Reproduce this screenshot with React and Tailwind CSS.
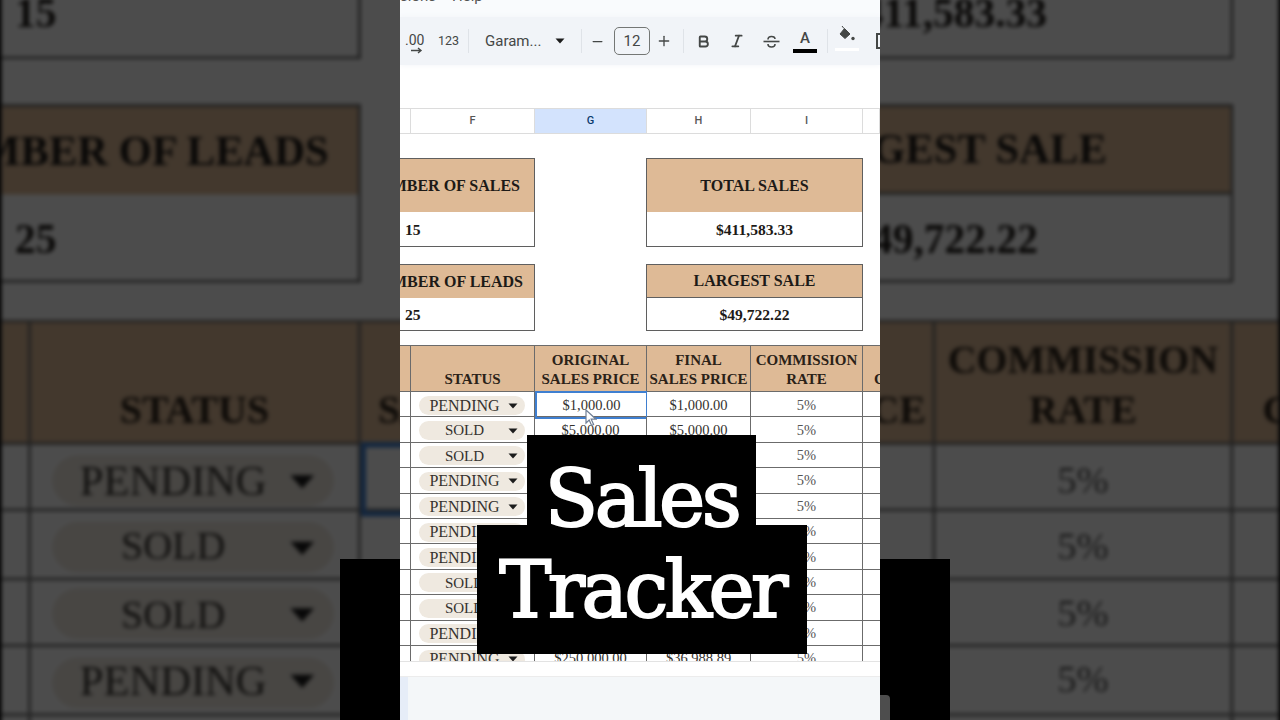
import React from 'react';
import { Minus, Plus, Bold, Italic } from 'lucide-react';

const SERIF = 'font-["Liberation_Serif",serif]';
const ROW_COLS = 'grid grid-cols-[11px_124px_112px_104px_112px_17px]';

const ROWS = [
    { status: 'PENDING', original: '$1,000.00', final: '$1,000.00', selected: true },
    { status: 'SOLD', original: '$5,000.00', final: '$5,000.00' },
    { status: 'SOLD' },
    { status: 'PENDING' },
    { status: 'PENDING' },
    { status: 'PENDING' },
    { status: 'PENDING' },
    { status: 'SOLD' },
    { status: 'SOLD' },
    { status: 'PENDING' },
    { status: 'PENDING', original: '$250,000.00', final: '$36,988.89' },
];

const Divider = ({ className }) => <div className={`h-[24px] w-px bg-[#dfe3e8] ${className}`} />;

const Caret = () => (
    <svg width="10" height="6" viewBox="0 0 10 6" className="shrink-0">
        <path d="M0.5 0.5h9L5 5.5z" fill="#1c1c1c" />
    </svg>
);

const Toolbar = () => (
    <div className="h-[108px] bg-white font-['Roboto',sans-serif] text-[#444746]">
        <div className="h-[17px] bg-[#f9fbfd] overflow-hidden">
            <div className="-mt-[12px] text-[15px] leading-[17px] whitespace-nowrap text-[#555]">
                sions<span className="ml-[16px]">Help</span>
            </div>
        </div>
        <div className="relative h-[48px] bg-[#f1f4f8] shadow-[0_0_6px_#f1f4f8] flex items-center [&>*]:shrink-0">
            <div className="relative w-[20px] ml-[5px] h-[24px] text-[14px] leading-[22px]">
                .00
                <svg width="12" height="7" viewBox="0 0 12 7" className="absolute left-[6px] top-[18px]">
                    <path d="M0 3.5h9M7 1l3 2.5L7 6" stroke="#444746" strokeWidth="1.4" fill="none" />
                </svg>
            </div>
            <span className="ml-[13px] text-[12.5px] w-[20px]">123</span>
            <Divider className="ml-[10px]" />
            <span className="ml-[16px] w-[60px] text-[15px] whitespace-nowrap">Garam...</span>
            <div className="ml-[10px]"><Caret /></div>
            <Divider className="ml-[16px]" />
            <Minus size={15} strokeWidth={2} className="ml-[8px]" />
            <div className="ml-[9px] w-[36px] h-[28px] border border-[#747775] rounded-[5px] flex items-center justify-center text-[15px]">12</div>
            <Plus size={16} strokeWidth={2} className="ml-[6px]" />
            <Divider className="ml-[11px]" />
            <Bold size={15} strokeWidth={3} className="ml-[12px]" />
            <Italic size={16} strokeWidth={2.6} className="ml-[18px]" />
            <svg width="17" height="17" viewBox="0 0 17 17" className="ml-[18px]" fill="none" stroke="#444746" strokeWidth="1.6">
                <path d="M0.5 8.5h16" />
                <path d="M5 6.5c0-4 7-4 7-0.5" />
                <path d="M5 11c0 4 7 4 7 0" />
            </svg>
            <div className="ml-[13px] w-[24px] h-[26px] flex flex-col items-center">
                <span className="text-[15px] leading-[20px] font-medium">A</span>
                <div className="mt-[1px] h-[4px] w-[24px] bg-black" />
            </div>
            <Divider className="ml-[10px]" />
            <div className="ml-[9px] w-[20px] flex flex-col items-center">
                <svg width="20" height="20" viewBox="0 0 20 20" className="-mt-[6px]">
                    <path d="M5 1l2 2.5M7.5 3.5L13 9l-5 4.5L3 9z" fill="#444746" stroke="#444746" strokeWidth="1" />
                    <circle cx="16" cy="13.5" r="1.7" fill="#444746" />
                </svg>
                <div className="mt-[3px] h-[3px] w-[24px] bg-white shrink-0" />
            </div>
            <div className="ml-[19px] w-[10px] h-[16px] border-2 border-[#444746]" />
        </div>
    </div>
);

const ColumnHeaders = () => (
    <div className={`${ROW_COLS} h-[26px] bg-white border-y border-[#dcdcdc] text-[11px] font-['Roboto',sans-serif] font-medium text-[#575757]`}>
        {['', 'F', 'G', 'H', 'I', ''].map((c, i) => (
            <div
                key={i}
                className={`flex items-center justify-center border-r border-[#dcdcdc] ${c === 'G' ? 'bg-[#d3e3fd] text-[#0b3a6e]' : ''}`}
            >
                {c}
            </div>
        ))}
    </div>
);

const StatBox = ({ title, value, titleH, bodyH, pr, ruled }) => (
    <div className={`border-y border-[#5f5f5f] ${pr ? 'border-r' : 'border-x'} font-bold text-[#1d1a17]`}>
        <div
            className={`flex items-center ${pr ? 'justify-end' : 'justify-center'} bg-[#deba96] text-[16px] whitespace-nowrap overflow-hidden ${ruled ? 'border-b border-[#5f5f5f]' : ''}`}
            style={{ height: titleH, paddingRight: pr }}
        >
            {title}
        </div>
        <div
            className={`flex items-center pt-[1px] ${pr ? 'pl-[5px]' : 'justify-center'} text-[15.6px] bg-white`}
            style={{ height: bodyH }}
        >
            {value}
        </div>
    </div>
);

const StatBoxes = () => (
    <div className={`${SERIF} h-[211px] bg-white grid grid-cols-[135px_111px_217px_17px] grid-rows-[89px_67px] gap-y-[17px] pt-[24px]`}>
        <StatBox title="NUMBER OF SALES" value="15" titleH={53} bodyH={34} pr={14} />
        <div />
        <StatBox title="TOTAL SALES" value="$411,583.33" titleH={53} bodyH={34} />
        <div />
        <StatBox title="NUMBER OF LEADS" value="25" titleH={33} bodyH={32} pr={11} />
        <div />
        <StatBox title="LARGEST SALE" value="$49,722.22" titleH={33} bodyH={32} ruled />
        <div />
    </div>
);

const HeaderCell = ({ lines, className = '' }) => (
    <div className={`flex flex-col justify-end items-center pb-[2px] border-r border-[#6b6b6b] text-[15px] leading-[19px] font-bold whitespace-nowrap overflow-hidden ${className}`}>
        {lines.map((l) => <span key={l}>{l}</span>)}
    </div>
);

const SalesRow = ({ status, original, final, selected }) => (
    <div className={`${ROW_COLS} h-[25.4px] border-b border-[#6b6b6b] text-[14.5px] text-[#35322e] [&>*]:pt-[2px]`}>
        <div className="border-r border-[#6b6b6b]" />
        <div className="border-r border-[#6b6b6b] flex items-center">
            <div className="ml-[8px] w-[106px] h-[19px] rounded-full bg-[#efe9e0] flex items-center pr-[7px]">
                <span className={`flex-1 text-center pl-[2px] ${status === 'PENDING' ? 'text-[16px]' : 'text-[15px]'}`}>{status}</span>
                <Caret />
            </div>
        </div>
        <div className={`flex items-center justify-center border-r ${selected ? 'border-2 border-[#3f7fd0] -my-px' : 'border-[#6b6b6b]'}`}>
            {original}
        </div>
        <div className="flex items-center justify-center border-r border-[#6b6b6b]">{final}</div>
        <div className="flex items-center justify-center border-r border-[#6b6b6b] text-[#555]">5%</div>
        <div />
    </div>
);

const SalesTable = () => (
    <div className={`${SERIF} relative h-[317px] overflow-hidden bg-white border-b border-[#e3e3e3]`}>
        <div className={`${ROW_COLS} h-[47px] bg-[#deba96] border-y border-[#6b6b6b] text-[#2b2218]`}>
            <div className="border-r border-[#6b6b6b]" />
            <HeaderCell lines={['STATUS']} />
            <HeaderCell lines={['ORIGINAL', 'SALES PRICE']} />
            <HeaderCell lines={['FINAL', 'SALES PRICE']} />
            <HeaderCell lines={['COMMISSION', 'RATE']} />
            <HeaderCell lines={['C']} className="border-r-0 items-start pl-[11px]" />
        </div>
        {ROWS.map((r, i) => <SalesRow key={i} {...r} />)}
        {/* mouse pointer over the selected cell */}
        <svg width="12" height="18" viewBox="0 0 12 18" className="absolute left-[185px] top-[64px]">
            <path d="M1 1v13l3.2-3 2.4 5.5 2-1-2.4-5.3H11z" fill="#fff" stroke="#6f7f95" strokeWidth="1.2" />
        </svg>
    </div>
);

const Sheet = () => (
    <div className="w-[480px] h-[720px] bg-white overflow-hidden">
        <Toolbar />
        <ColumnHeaders />
        <StatBoxes />
        <SalesTable />
        <div className="h-[15px] bg-white border-b border-[#ececec]" />
        <div className="flex h-[43px] bg-[#f4f7f9]">
            <div className="w-[8px] bg-[#e6edf8]" />
        </div>
    </div>
);

export default function App() {
    return (
        <div className="relative w-[1280px] h-[720px] overflow-hidden bg-black">
            {/* blurred, dimmed, enlarged copy behind the portrait video */}
            <div className="absolute left-[400px] top-0 origin-top scale-[2.66] -translate-y-[598px] blur-[0.7px] brightness-[0.3]">
                <Sheet />
            </div>
            <div className="absolute left-[340px] top-[559px] w-[610px] h-[161px] bg-black" />
            <div className="absolute left-[880px] top-[695px] w-[10px] h-[25px] bg-[#4d4d4d] rounded-tr-[4px]" />

            <div className="absolute left-[400px] top-0">
                <Sheet />
            </div>

            {/* caption */}
            <div className="absolute left-[2px] top-[435px] w-full flex flex-col items-center font-['DejaVu_Serif',serif] text-white text-[78px] leading-none tracking-[-3.5px] [-webkit-text-stroke:2px_white]">
                <div className="relative z-10 w-[229px] h-[90px] -ml-[1px] flex justify-center pt-[25px] bg-black">Sales</div>
                <div className="w-[330px] h-[129px] flex justify-center pt-[26px] bg-black">Tracker</div>
            </div>
        </div>
    );
}
